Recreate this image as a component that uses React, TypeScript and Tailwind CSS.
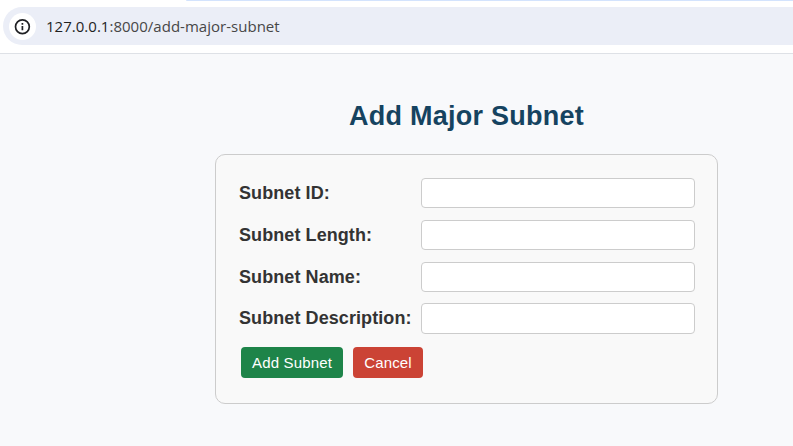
const fields = [
  { id: "subnet-id", label: "Subnet ID:", box: "h-[30px] mb-3", nudge: "" },
  { id: "subnet-length", label: "Subnet Length:", box: "h-[30px] mb-3", nudge: "" },
  { id: "subnet-name", label: "Subnet Name:", box: "h-[30px] mb-[11px]", nudge: "" },
  { id: "subnet-description", label: "Subnet Description:", box: "h-[31px] mb-[13px]", nudge: "pb-[2px]" },
];

function AddressBar() {
  return (
    <header className="flex h-[54px] flex-col border-b border-[#dee1e6] bg-white">
      <div className="ml-[186px] h-px shrink-0 rounded-bl-full bg-[#d3e3fd]" />
      <div className="mt-[6px] ml-[3px] flex h-[38px] items-center rounded-l-full bg-[#ebeef7] pl-[6px]">
        <span className="mt-px flex size-[27px] shrink-0 items-center justify-center rounded-full bg-white">
          <svg width="27" height="27" viewBox="0 0 27 27" fill="none">
            <circle cx="13.4" cy="13.8" r="6.9" stroke="#202124" strokeWidth="1.7" />
            <path d="M13.4 13v4.3M13.4 10.1v1.7" stroke="#202124" strokeWidth="1.7" />
          </svg>
        </span>
        <span className="ml-[10px] font-['Open_Sans',sans-serif] text-[15px] tracking-[0.02px] whitespace-nowrap text-[#474747]">
          <span className="text-[#1f1f1f]">127.0.0.1</span>:8000/add-major-subnet
        </span>
      </div>
    </header>
  );
}

export default function App() {
  return (
    <div className="flex h-[446px] w-[793px] flex-col overflow-hidden bg-[#f8f9fb] font-['Liberation_Sans',Arial,sans-serif]">
      <AddressBar />
      <main className="ml-[215px] w-[503px] pt-[44px]">
        <h1 className="mb-[20px] text-center text-[27px] leading-[36px] font-bold tracking-[0.25px] text-[#154360]">
          Add Major Subnet
        </h1>
        <form className="h-[250px] rounded-[10px] border border-[#cccccc] bg-[#f9f9f9] pt-[23px] pr-[22px] pl-[23px]">
          {fields.map((f) => (
            <div key={f.id} className={`flex items-center ${f.box}`}>
              <label
                htmlFor={f.id}
                className={`w-[182px] text-[18px] leading-[20px] font-bold tracking-[0.08px] whitespace-nowrap text-[#333333] ${f.nudge}`}
              >
                {f.label}
              </label>
              <input id={f.id} className="h-full w-[274px] rounded border border-[#cccccc] bg-white px-2 outline-none" />
            </div>
          ))}
          <div className="ml-[2px] flex gap-[10px]">
            <button type="button" className="h-[31px] w-[102px] rounded bg-[#1e8449] text-[15px] leading-[18px] tracking-[0.15px] whitespace-nowrap text-white">
              Add Subnet
            </button>
            <button type="button" className="h-[31px] w-[70px] rounded bg-[#cb4335] text-[15px] leading-[18px] tracking-[0.15px] text-white">
              Cancel
            </button>
          </div>
        </form>
      </main>
    </div>
  );
}
